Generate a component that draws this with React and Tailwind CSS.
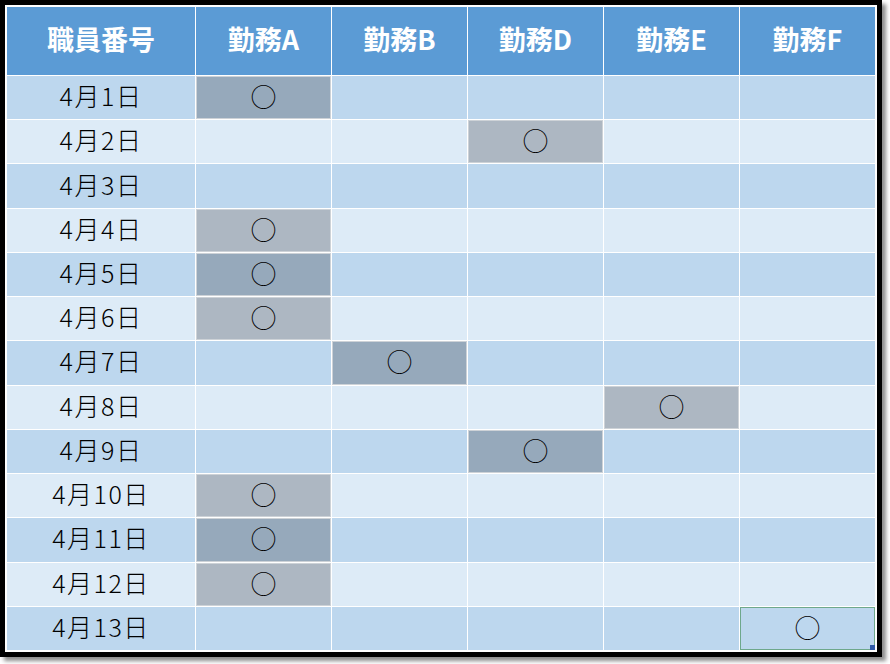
import React from "react";

const headers = ["職員番号", "勤務A", "勤務B", "勤務D", "勤務E", "勤務F"];
// column index (1..5) with ○ per row; 0 = none
const marks = [1, 3, 0, 1, 1, 1, 2, 4, 3, 1, 1, 1, 5];

export default function App() {
  return (
    <div className="w-[890px] h-[664px] bg-white relative" style={{ fontFamily: '"Noto Sans CJK JP", "Noto Sans", sans-serif' }}>
      <div className="w-[882px] h-[657px] border-[5px] border-black p-[2px] bg-white shadow-[4px_4px_4px_rgba(0,0,0,0.45)]">
        <div className="grid grid-cols-[188px_135px_135px_135px_135px_135px] grid-rows-[68px_repeat(13,minmax(0,1fr))] gap-px bg-white h-[643px]">
          {headers.map((h) => (
            <div key={h} className="bg-[#5b9bd5] text-white font-bold text-[27px] pb-[5px] flex items-center justify-center leading-none">
              {h}
            </div>
          ))}
          {marks.map((m, i) => {
            const dark = i % 2 === 0;
            const rowBg = dark ? "bg-[#bdd7ee]" : "bg-[#ddebf7]";
            const grayBg = dark ? "bg-[#96a9bb]" : "bg-[#adb7c2]";
            const cells = [];
            cells.push(
              <div key={`d${i}`} className={`${rowBg} flex items-center justify-center text-[25px] font-light tracking-[1.5px] pb-[4px] text-black leading-none`}>
                4月{i + 1}日
              </div>
            );
            for (let c = 1; c <= 5; c++) {
              const has = m === c;
              const selected = i === 12 && c === 5;
              if (has && !selected) {
                cells.push(
                  <div key={`c${i}-${c}`} className={`${grayBg} border border-[#cdd2d7] flex items-center justify-center text-[26px] font-light pb-[3px] text-black leading-none`}>
                    ○
                  </div>
                );
              } else if (selected) {
                cells.push(
                  <div key={`c${i}-${c}`} className={`${rowBg} relative border border-[#6ea88c] flex items-center justify-center text-[26px] font-light pb-[3px] text-black leading-none`}>
                    ○
                    <span className="absolute right-[-1px] bottom-[-1px] w-[5px] h-[5px] bg-[#2f5aa8]" />
                  </div>
                );
              } else {
                cells.push(<div key={`c${i}-${c}`} className={rowBg} />);
              }
            }
            return cells;
          })}
        </div>
      </div>
    </div>
  );
}
